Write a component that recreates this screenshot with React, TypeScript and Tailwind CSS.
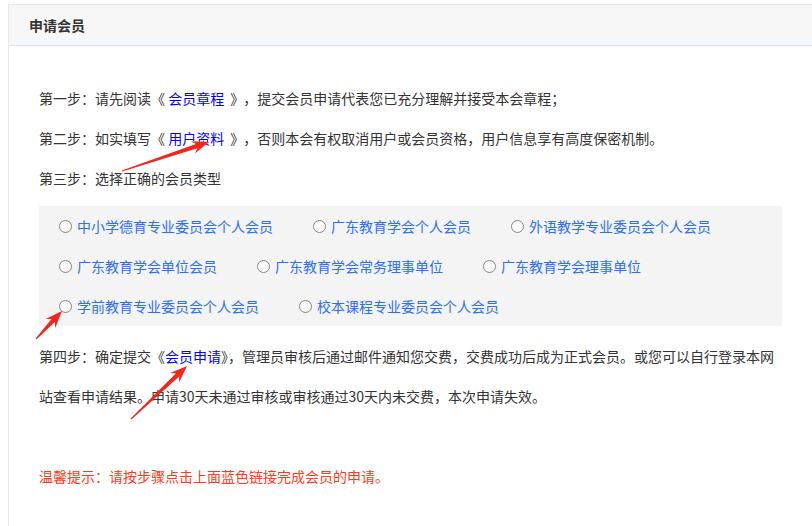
import type { ReactNode } from 'react'

const options = [
  ['中小学德育专业委员会个人会员', '广东教育学会个人会员', '外语教学专业委员会个人会员'],
  ['广东教育学会单位会员', '广东教育学会常务理事单位', '广东教育学会理事单位'],
  ['学前教育专业委员会个人会员', '校本课程专业委员会个人会员'],
]

// annotation arrows: [tailX, tailY, tipX, tipY]
const arrows = [
  [122, 171, 209, 142],
  [36, 339, 62, 311],
  [131, 419, 187, 366],
]

function arrowPoints(x1: number, y1: number, x2: number, y2: number) {
  const len = Math.hypot(x2 - x1, y2 - y1)
  const dx = (x2 - x1) / len
  const dy = (y2 - y1) / len
  const nx = -dy
  const ny = dx
  const L = 17
  const W = 6.5
  const p = (d: number, n: number) => `${(x2 - dx * d + nx * n).toFixed(1)},${(y2 - dy * d + ny * n).toFixed(1)}`
  const tail = (n: number) => `${(x1 + nx * n).toFixed(1)},${(y1 + ny * n).toFixed(1)}`
  return [tail(0.6), p(L - 4, 2.2), p(L, W), p(0, 0), p(L, -W), p(L - 4, -2.2), tail(-0.6)].join(' ')
}

function Step({ children }: { children: ReactNode }) {
  return <p className="leading-[40px]">{children}</p>
}

function Link({ children }: { children: ReactNode }) {
  return <a className="text-[#0000ff] cursor-pointer">{children}</a>
}

export default function App() {
  return (
    <div className="relative h-[526px] w-[812px] overflow-hidden bg-white font-['Noto_Sans_CJK_SC',sans-serif] text-[14px] text-[#333]">
      <div className="ml-2 mt-1 min-h-[522px] w-[840px] border-l border-t border-[#e8e8e8]">
        <div className="flex h-[41px] items-center border-b border-[#cce4f7] bg-[#f7f7f7] pl-5 font-bold text-[#333]">
          申请会员
        </div>

        <div className="w-[773px] pl-[30px] pt-[32px]">
          <Step>
            第一步：请先阅读《 <Link>会员章程</Link> <span className="ml-[3px] mr-[6px]">》</span>，提交会员申请代表您已充分理解并接受本会章程；
          </Step>
          <Step>
            第二步：如实填写《 <Link>用户资料</Link> <span className="ml-[3px] mr-[6px]">》</span>，否则本会有权取消用户或会员资格，用户信息享有高度保密机制。
          </Step>
          <Step>第三步：选择正确的会员类型</Step>

          <div className="mt-2 bg-[#f4f4f4] pl-5">
            {options.map((row, i) => (
              <div key={i} className="flex h-10 items-center">
                {row.map((label) => (
                  <label key={label} className="mr-10 flex cursor-pointer items-center gap-[5px] text-[#2a6ff6]">
                    <span className="h-[13px] w-[13px] rounded-full border border-[#858585] bg-[#fbfbfb]" />
                    {label}
                  </label>
                ))}
              </div>
            ))}
          </div>

          <p className="mt-[10px] leading-[40px]">
            第四步：确定提交《<Link>会员申请</Link>》，管理员审核后通过邮件通知您交费，交费成功后成为正式会员。或您可以自行登录本网
            <br />
            站查看申请结果。申请30天未通过审核或审核通过30天内未交费，本次申请失效。
          </p>

          <p className="mt-10 leading-[40px] text-[#ff3a1a]">温馨提示：请按步骤点击上面蓝色链接完成会员的申请。</p>
        </div>
      </div>

      <svg className="pointer-events-none absolute left-0 top-0" width="812" height="526">
        {arrows.map(([a, b, c, d], i) => (
          <polygon key={i} points={arrowPoints(a, b, c, d)} fill="#f2261b" />
        ))}
      </svg>
    </div>
  )
}
